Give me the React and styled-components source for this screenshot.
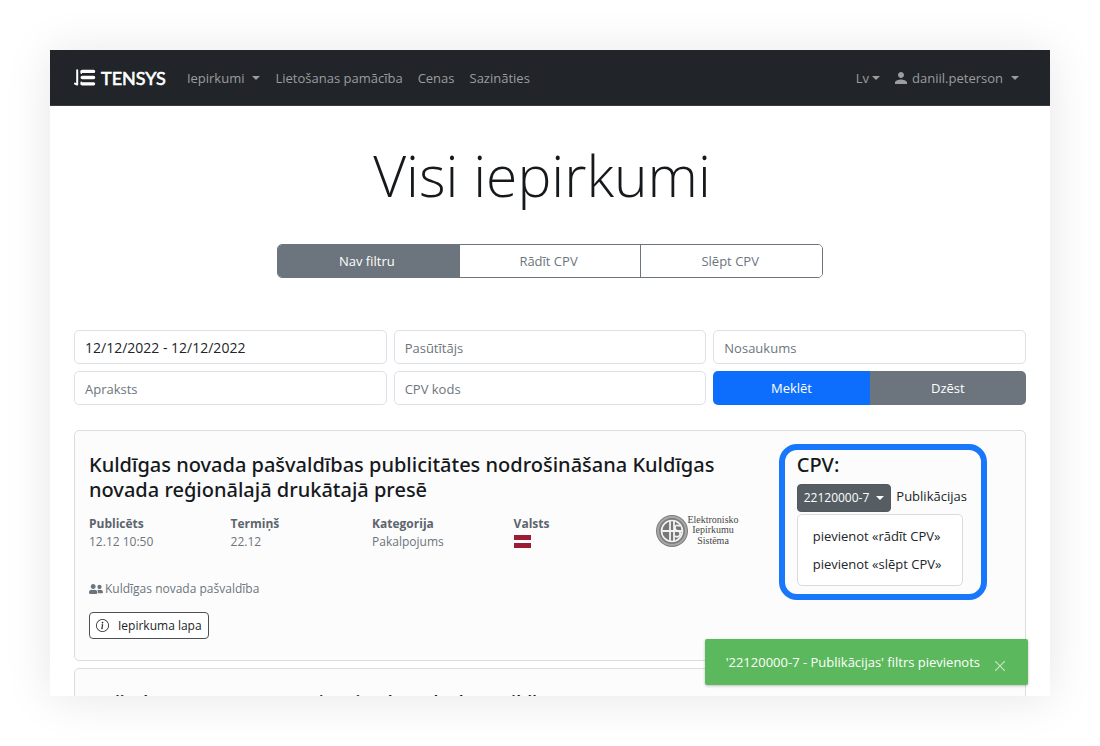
import React from "react";
import styled, { createGlobalStyle, css } from "styled-components";
import { BsInfoCircle } from "react-icons/bs";
import { MdPerson } from "react-icons/md";
import { FaUserFriends } from "react-icons/fa";

const GlobalStyle = createGlobalStyle`
  *, *::before, *::after { box-sizing: border-box; }
  body {
    margin: 0;
    background: #fff;
    color: #212529;
    font: 14px/20px "Open Sans", "Noto Sans", sans-serif;
  }
  button, input { font: inherit; }
  button { cursor: pointer; }
  h1, h2, h3, p, ul, dl, dd { margin: 0; padding: 0; }
  ul { list-style: none; }
`;

const Stage = styled.div`
  padding: 50px;
`;

const Window = styled.div`
  position: relative;
  height: calc(100vh - 100px);
  overflow: hidden;
  background: #fff;
`;

const Shadow = styled.div`
  box-shadow: 0 2px 44px rgba(0, 0, 0, 0.1);
`;

const Navbar = styled.header`
  display: flex;
  align-items: center;
  height: 56px;
  padding: 0 24px;
  background: #212529;
  border-bottom: 1px solid #373b3e;
`;

const Brand = styled.a`
  display: flex;
  align-items: center;
  gap: 5px;
  margin-right: 21px;
  color: #fff;
  font: 400 18px/20px Lato, sans-serif;
  -webkit-text-stroke: 0.6px currentColor;
  text-decoration: none;
`;

const Nav = styled.nav`
  display: flex;
  align-items: center;
  gap: 15px;
  margin-left: ${(p) => (p.$end ? "auto" : "0")};
  padding-right: ${(p) => (p.$end ? "7px" : "0")};
`;

const navItem = css`
  display: flex;
  align-items: center;
  padding: 0;
  border: 0;
  background: none;
  color: #9b9d9f;
  font-size: 13px;
  line-height: 20px;
  text-decoration: none;
`;

const NavLink = styled.a`
  ${navItem}
`;

const NavMenu = styled.button`
  ${navItem}
  gap: ${(p) => (p.$tight ? "3px" : "8px")};
  svg { margin: 0 -6px 0 -3px; }
`;

const Caret = styled.span`
  border: 4px solid transparent;
  border-top-color: currentColor;
  border-bottom: 0;
`;

const Main = styled.main`
  padding: 35px 24px 0;
`;

const Title = styled.h1`
  padding-right: 16px;
  color: #16191c;
  font-size: 57px;
  font-weight: 300;
  line-height: 68px;
  text-align: center;
`;

const Segments = styled.div`
  display: flex;
  max-width: 546px;
  height: 34px;
  margin: 35px auto 52px;
  border: 1px solid #6c757d;
  border-radius: 5px;
  overflow: hidden;
`;

const Segment = styled.button`
  flex: 1;
  padding: 0 3px 0 0;
  border: 0;
  border-left: 1px solid #6c757d;
  background: ${(p) => (p.$active ? "#6c757d" : "#fff")};
  color: ${(p) => (p.$active ? "#fff" : "#6c757d")};
  font-size: 13px;
  &:first-child { border-left: 0; }
`;

const Filters = styled.form`
  display: grid;
  grid-template-columns: repeat(3, 1fr);
  gap: 7px;
`;

const Field = styled.input`
  min-width: 0;
  height: 34px;
  padding: 0 10px;
  border: 1px solid #dde1e5;
  border-radius: 5px;
  background: #fff;
  color: #212529;
  font-size: 14px;
  &::placeholder { color: #6c757d; font-size: 13px; opacity: 1; }
`;

const Actions = styled.div`
  display: flex;
  border-radius: 5px;
  overflow: hidden;
`;

const Action = styled.button`
  flex: 1;
  border: 0;
  background: ${(p) => (p.$primary ? "#0d6efd" : "#6c757d")};
  color: #fff;
  font-size: 13px;
`;

const List = styled.div`
  display: grid;
  gap: 7px;
  margin-top: 25px;
`;

const Card = styled.article`
  display: grid;
  grid-template-columns: 31fr 10fr;
  min-height: 231px;
  padding: 21px 0 16px 14px;
  border: 1px solid #dcdddd;
  border-radius: 5px;
  background: #fcfcfc;
`;

const CardTitle = styled.h2`
  padding-right: ${(p) => (p.$wide ? "48px" : "0")};
  color: #16191c;
  font-family: "Noto Sans", "Open Sans", sans-serif;
  font-size: 20px;
  font-weight: 500;
  line-height: 25px;
`;

const Facts = styled.dl`
  display: grid;
  grid-template-columns: repeat(5, 1fr);
  margin-top: 13px;
  color: #6c757d;
  font-size: 12px;
  line-height: 18px;
  dt { font-weight: 700; color: #5c656d; }
`;

const Flag = styled.svg`
  display: block;
  margin-top: 2px;
`;

const Owner = styled.p`
  display: flex;
  align-items: center;
  gap: 2px;
  margin-top: 28px;
  color: #6c757d;
  font-size: 12px;
  line-height: 20px;
`;

const PageButton = styled.button`
  display: flex;
  align-items: center;
  gap: 9px;
  height: 27px;
  margin-top: 13px;
  padding: 0 6px;
  border: 1px solid #4d5154;
  border-radius: 4px;
  background: #fff;
  color: #212529;
  font-size: 12px;
`;

const Cpv = styled.section`
  position: relative;
  justify-self: start;
`;

const Highlight = styled.div`
  position: absolute;
  inset: -8px -20px auto -18px;
  height: 156px;
  border: 6px solid #1877fb;
  border-radius: 18px;
  pointer-events: none;
`;

const CpvRow = styled.div`
  display: flex;
  gap: 5px;
  margin-top: 7px;
  font-size: 13px;
  line-height: 24px;
`;

const CodeButton = styled.button`
  display: flex;
  align-items: center;
  gap: 7px;
  height: 28px;
  padding: 0 6px;
  border: 1px solid #51585e;
  border-radius: 4px;
  background: #565e64;
  color: #fff;
  font-size: 12px;
`;

const Menu = styled.ul`
  display: grid;
  width: 166px;
  margin-top: 2px;
  padding: 7px 0;
  border: 1px solid #d9dadb;
  border-radius: 5px;
  background: #fff;
`;

const MenuItem = styled.button`
  display: block;
  width: 100%;
  padding: 4px 15px;
  border: 0;
  background: none;
  color: #212529;
  font-size: 13px;
  line-height: 20px;
  text-align: left;
  white-space: nowrap;
`;

const Toast = styled.div`
  position: absolute;
  right: 22px;
  bottom: 11px;
  display: flex;
  align-items: center;
  gap: 15px;
  height: 46px;
  padding: 0 23px 0 21px;
  border-radius: 2px;
  background: #5cb85c;
  color: #fff;
  font-size: 13px;
  box-shadow: 0 1px 3px rgba(0, 0, 0, 0.25);
`;

const Close = styled.button`
  display: flex;
  padding: 7px 0 0;
  border: 0;
  background: none;
  color: #c5e6c5;
`;

const Logo = () => (
  <svg width="22" height="18" viewBox="0 0 22 18" fill="none" stroke="#fff" strokeLinecap="round" aria-hidden="true">
    <path d="M3.2 1.3V15.5L1 14.6" strokeWidth="2" strokeLinejoin="round" />
    <path d="M8.2 2.4H19.6M8.2 8.5H19.6M8.2 14.8H19.6" strokeWidth="3.3" />
    <path d="M7.3 2V4.2M7.3 13.2V15" strokeWidth="1.6" />
  </svg>
);

const EisLogo = () => (
  <svg width="84" height="36" viewBox="0 0 84 36" role="img" aria-label="Elektronisko Iepirkumu Sistēma">
    <circle cx="17" cy="16" r="16" fill="#7c7c7c" />
    <circle cx="17" cy="16" r="14" fill="none" stroke="#a8a8a8" strokeWidth="2" />
    <circle cx="17" cy="16" r="10.5" fill="#777" stroke="#f2f2f2" strokeWidth="1.6" />
    <g fill="none" stroke="#f2f2f2" strokeWidth="1.8">
      <path d="M7 16H27M15 5.500V26.5M19 5.500V26.5M25 11Q20 9 20 13Q20 16 23 16Q26 17 25 20Q23 23 20 21" />
    </g>
    <g fill="#484848" fontFamily="Liberation Serif, serif" fontSize="10" textAnchor="middle">
      <text x="58" y="8">Elektronisko</text>
      <text x="58" y="18">Iepirkumu</text>
      <text x="58" y="29">Sistēma</text>
    </g>
  </svg>
);

export default function App() {
  return (
    <Stage>
      <GlobalStyle />
      <Shadow>
        <Window>
          <Navbar>
            <Brand href="#"><Logo />TENSYS</Brand>
            <Nav>
              <NavMenu type="button">Iepirkumi <Caret /></NavMenu>
              <NavLink href="#">Lietošanas pamācība</NavLink>
              <NavLink href="#">Cenas</NavLink>
              <NavLink href="#">Sazināties</NavLink>
            </Nav>
            <Nav $end>
              <NavMenu type="button" $tight>Lv <Caret /></NavMenu>
              <NavMenu type="button"><MdPerson size={18} />daniil.peterson <Caret /></NavMenu>
            </Nav>
          </Navbar>
          <Main>
            <Title>Visi iepirkumi</Title>
            <Segments role="group" aria-label="CPV filtrs">
              <Segment type="button" $active>Nav filtru</Segment>
              <Segment type="button">Rādīt CPV</Segment>
              <Segment type="button">Slēpt CPV</Segment>
            </Segments>
            <Filters>
              <Field aria-label="Datums" defaultValue="12/12/2022 - 12/12/2022" />
              <Field aria-label="Pasūtītājs" placeholder="Pasūtītājs" />
              <Field aria-label="Nosaukums" placeholder="Nosaukums" />
              <Field aria-label="Apraksts" placeholder="Apraksts" />
              <Field aria-label="CPV kods" placeholder="CPV kods" />
              <Actions>
                <Action type="button" $primary>Meklēt</Action>
                <Action type="button">Dzēst</Action>
              </Actions>
            </Filters>
            <List>
              <Card>
                <div>
                  <CardTitle $wide>Kuldīgas novada pašvaldības publicitātes nodrošināšana Kuldīgas novada reģionālajā drukātajā presē</CardTitle>
                  <Facts>
                    <div><dt>Publicēts</dt><dd>12.12 10:50</dd></div>
                    <div><dt>Termiņš</dt><dd>22.12</dd></div>
                    <div><dt>Kategorija</dt><dd>Pakalpojums</dd></div>
                    <div>
                      <dt>Valsts</dt>
                      <dd>
                        <Flag width="17" height="13" viewBox="0 0 17 13" role="img" aria-label="Latvija">
                          <path fill="#fff" d="M0 0H17V13H0z" />
                          <path fill="#9e1b34" d="M0 0H17V5H0zM0 8H17V13H0z" />
                        </Flag>
                      </dd>
                    </div>
                    <EisLogo />
                  </Facts>
                  <Owner><FaUserFriends size={14} />Kuldīgas novada pašvaldība</Owner>
                  <PageButton type="button"><BsInfoCircle size={13} />Iepirkuma lapa</PageButton>
                </div>
                <Cpv>
                  <Highlight />
                  <CardTitle as="h3">CPV:</CardTitle>
                  <CpvRow>
                    <CodeButton type="button">22120000-7 <Caret /></CodeButton>
                    <span>Publikācijas</span>
                  </CpvRow>
                  <Menu>
                    <li><MenuItem type="button">pievienot «rādīt CPV»</MenuItem></li>
                    <li><MenuItem type="button">pievienot «slēpt CPV»</MenuItem></li>
                  </Menu>
                </Cpv>
              </Card>
              <Card>
                <CardTitle $wide>Dažādu pamatnes un saimniecības darbu veikšana</CardTitle>
              </Card>
            </List>
          </Main>
          <Toast role="status">
            '22120000-7 - Publikācijas' filtrs pievienots
            <Close type="button" aria-label="Aizvērt">
              <svg width="10" height="10" viewBox="0 0 10 10" stroke="currentColor" strokeWidth="1.2"><path d="M0 0L10 10M10 0L0 10" /></svg>
            </Close>
          </Toast>
        </Window>
      </Shadow>
    </Stage>
  );
}
